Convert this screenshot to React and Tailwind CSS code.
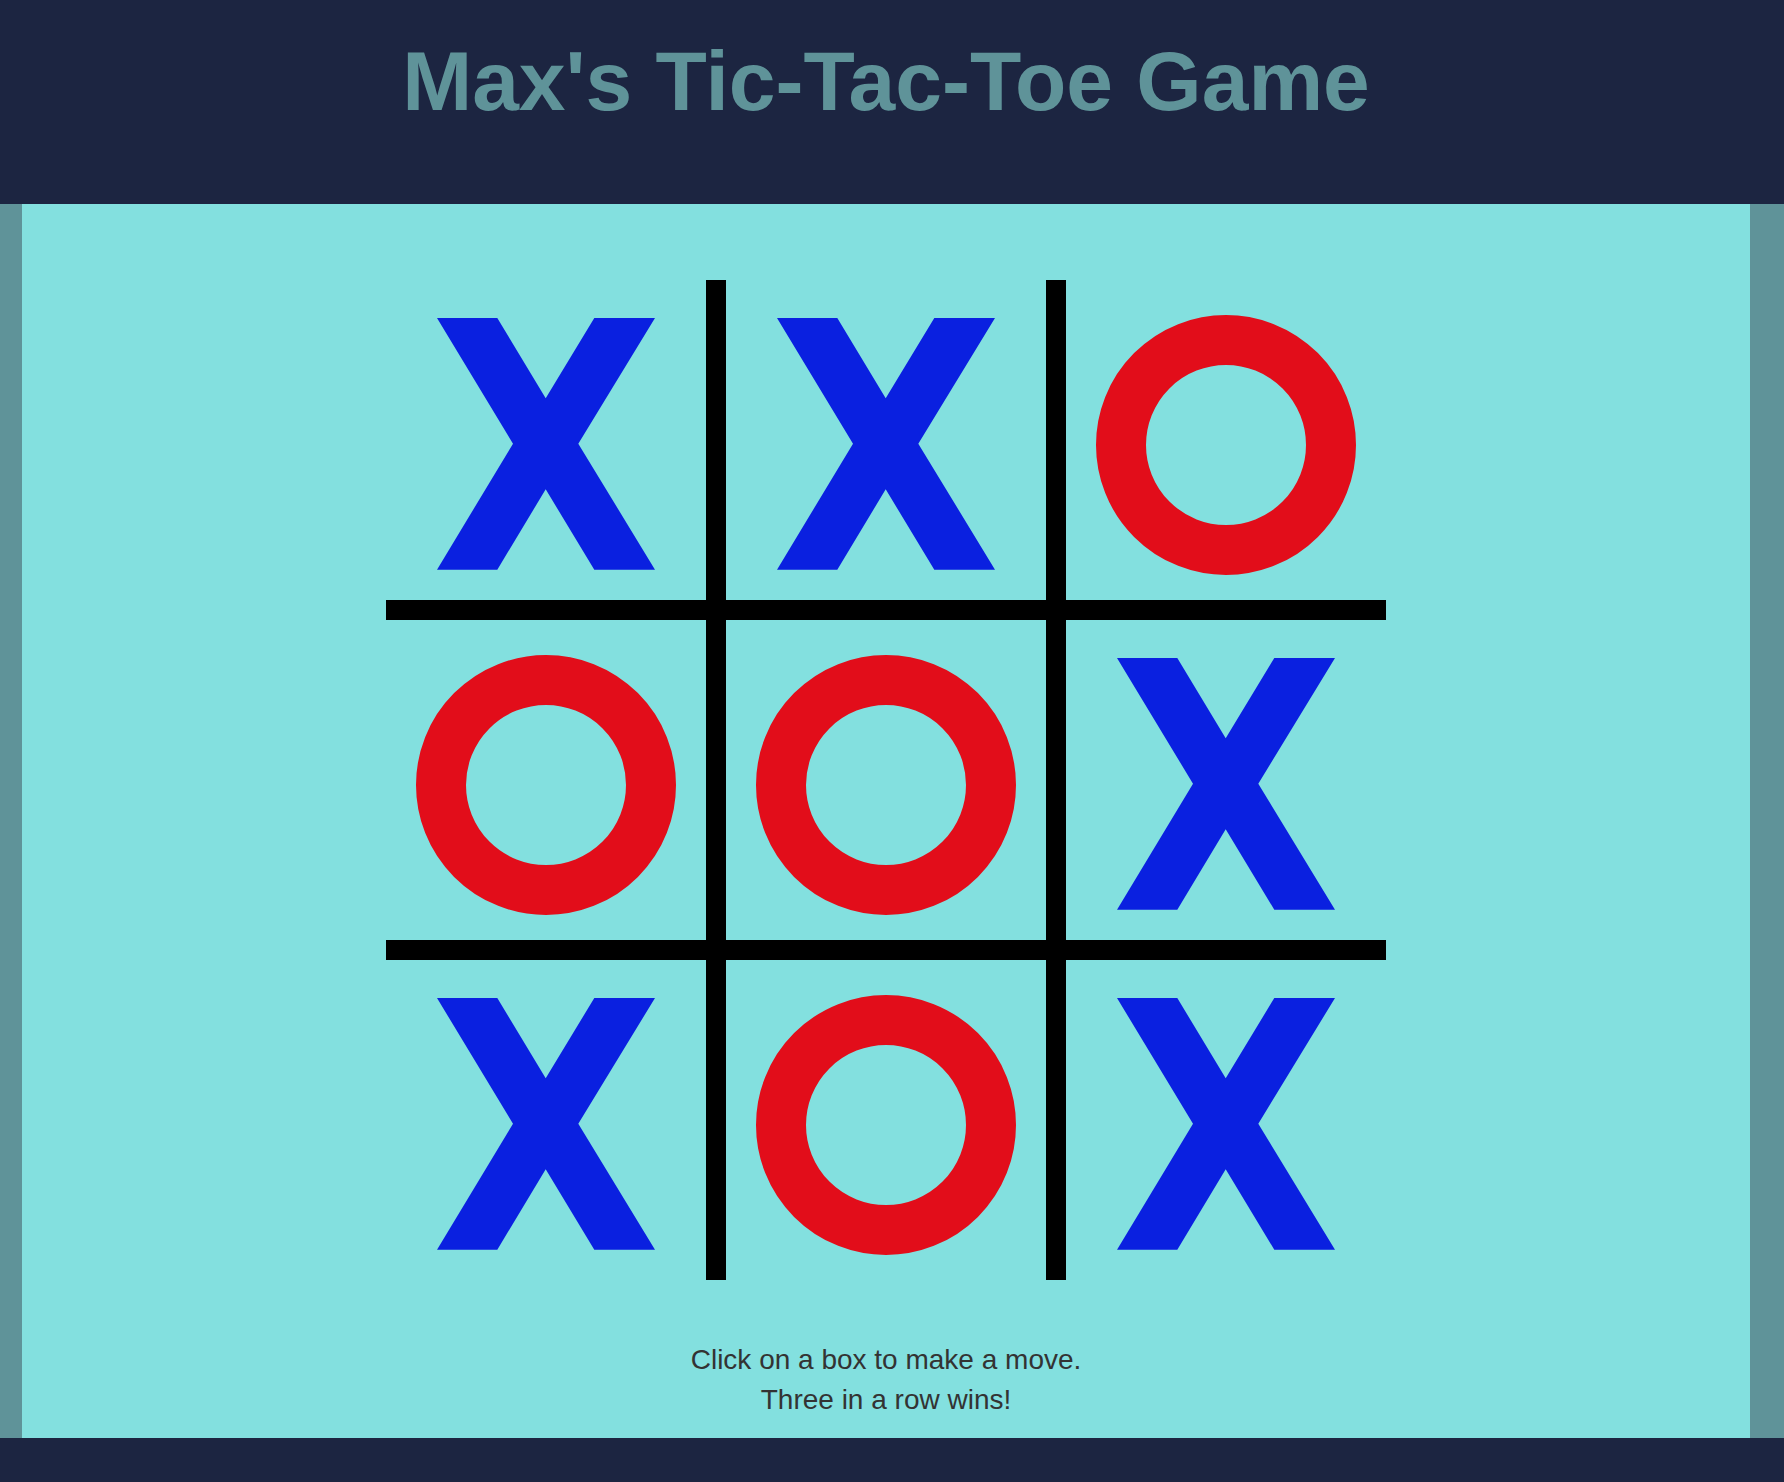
import React from "react";

const board = ["X", "X", "O", "O", "O", "X", "X", "O", "X"];

function XMark() {
  return (
    <svg width="320" height="320" viewBox="0 0 320 320">
      <polygon
        transform="translate(51 38)"
        fill="#0a20e0"
        points="0,0 60.3,0 108.7,80.3 157.3,0 218,0 141.3,125.7 218,251.7 157.3,251.7 108.7,171.3 60.3,251.7 0,251.7 76,125.7"
      />
    </svg>
  );
}

function OMark() {
  return (
    <svg width="320" height="320" viewBox="0 0 320 320">
      <circle cx="160" cy="165" r="105" fill="none" stroke="#e20d1a" strokeWidth="50" />
    </svg>
  );
}

export default function App() {
  return (
    <div className="w-full min-h-screen bg-[#1c2541]" style={{ fontFamily: '"Liberation Sans", Arial, sans-serif' }}>
      <header className="h-[204px] bg-[#1c2541] pt-[33px] pl-[22px] pr-[34px]">
        <h1 className="text-center text-[84px] leading-[96px] font-bold text-[#5f9399]">
          Max's Tic-Tac-Toe Game
        </h1>
      </header>
      <main className="h-[1234px] bg-[#83e0df] border-l-[22px] border-r-[34px] border-[#5f9399] flex flex-col items-center pt-[76px]">
        <div className="grid grid-cols-[320px_320px_320px] gap-[20px] bg-black">
          {board.map((v, i) => (
            <button key={i} className="w-[320px] h-[320px] bg-[#83e0df] p-0 m-0 block">
              {v === "X" ? <XMark /> : <OMark />}
            </button>
          ))}
        </div>
        <div className="mt-[60px] text-center text-[28px] leading-[40px] text-[#333333]">
          <p>Click on a box to make a move.</p>
          <p>Three in a row wins!</p>
        </div>
      </main>
      <footer className="h-[44px] bg-[#1c2541]" />
    </div>
  );
}
